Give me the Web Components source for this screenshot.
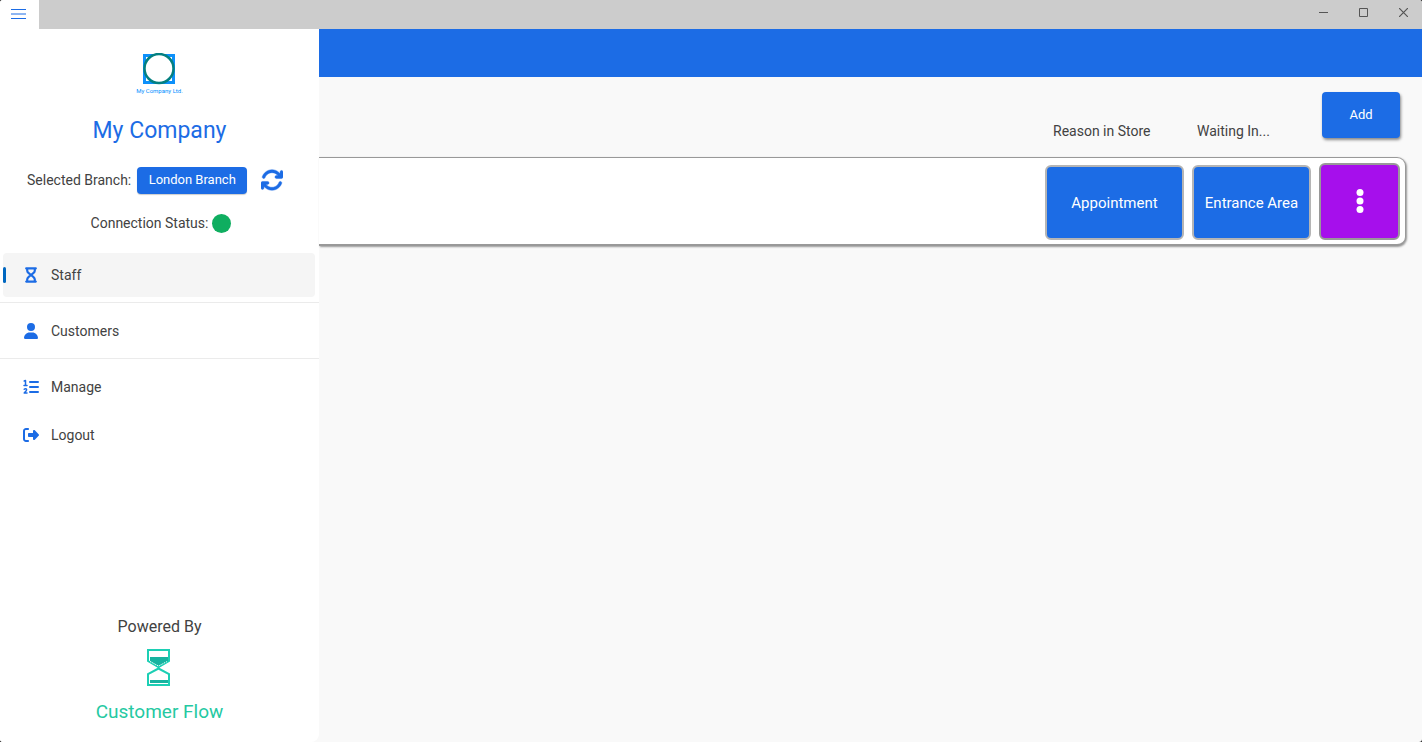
<!DOCTYPE html>
<html lang="en">
<head>
<meta charset="utf-8">
<title>My Company</title>
<style>
  html { background: #222; }
  body { margin: 0; font: 14px/20px Roboto, "Liberation Sans", sans-serif; color: #424242; --brand: #1c6ce5; }
</style>
</head>
<body>
<flow-app></flow-app>
<script>
const define = (name, html) => {
  const template = document.createElement('template');
  template.innerHTML = '<style>*{box-sizing:border-box}button{font:inherit;border:0;margin:0;padding:0;cursor:pointer}svg{display:block}</style>' + html;
  customElements.define(name, class extends HTMLElement {
    constructor() {
      super();
      this.attachShadow({ mode: 'open' }).append(template.content.cloneNode(true));
    }
  });
};

define('title-bar', `
<style>
  :host { display: flex; justify-content: space-between; height: 29px; background: #ccc; }
  .menu { width: 39px; padding: 0 2px 2px 0; background: #fff; display: grid; place-items: center; color: var(--brand); }
  .window { display: flex; }
  .window button { width: 40px; height: 25px; padding-left: 2px; background: none; display: grid; place-items: center; color: #555; }
</style>
<button class="menu" aria-label="Menu"><svg width="15" height="11" fill="none" stroke="currentColor"><path d="M0 1.500h15M0 6h15M0 10.500h15"/></svg></button>
<div class="window">
  <button aria-label="Minimise"><svg width="9" height="9" fill="none" stroke="currentColor"><path d="M0 4.500h9"/></svg></button>
  <button aria-label="Maximise"><svg width="9" height="9" fill="none" stroke="currentColor"><path d="M.5.5h8v8h-8z"/></svg></button>
  <button aria-label="Close"><svg width="9" height="9" fill="none" stroke="currentColor" stroke-width="1.200"><path d="M0 0l9 9M9 0l-9 9"/></svg></button>
</div>`);

define('company-brand', `
<style>
  :host { display: flex; flex-direction: column; align-items: center; }
  h1 { margin: 20px 0 0; font-size: 23px; line-height: 32px; font-weight: 400; color: var(--brand); }
  small { font-size: 6px; line-height: 8px; color: #0090ff; }
</style>
<svg width="35" height="34" fill="none"><path d="M2.500 2.500h29v27h-29z" stroke="#0d90fa" stroke-width="3"/><circle cx="17" cy="15.500" r="14.500" fill="#fff" stroke="#048080" stroke-width="2.500"/></svg>
<small>My Company Ltd.</small>
<h1><slot></slot></h1>`);

define('branch-status', `
<style>
  :host { display: block; }
  div { display: flex; align-items: center; }
  .branch { padding-left: 27px; height: 28px; }
  .pick { width: 110px; height: 27px; margin: 0 14px 0 6px; border-radius: 4px; background: var(--brand); color: #fff; font-size: 13px; box-shadow: 0 1px 1px #ccc; }
  .refresh { background: none; color: var(--brand); }
  .status { justify-content: center; gap: 4px; margin-top: 19px; padding-left: 3px; }
  i { width: 19px; height: 19px; border-radius: 50%; background: #0fae60; }
</style>
<div class="branch"><label for="pick">Selected Branch:</label><button class="pick" id="pick">London Branch</button>
<button class="refresh" aria-label="Refresh"><svg width="22" height="22" viewBox="16 16 480 480" fill="currentColor" stroke="currentColor" stroke-width="10"><path d="M105.1 202.6c7.7-21.8 20.2-42.3 37.800-59.800c62.500-62.500 163.800-62.500 226.300 0L386.300 160 352 160c-17.700 0-32 14.300-32 32s14.300 32 32 32l111.900 0c17.700 0 32-14.300 32-32l0-112c0-17.700-14.300-32-32-32s-32 14.300-32 32l0 35.200L414.400 97.600c-87.500-87.500-229.300-87.500-316.800 0C73.200 122 55.600 150.700 44.800 181.400c-5.900 16.700 2.900 34.900 19.500 40.800s34.900-2.900 40.800-19.500zM39 289.300c-5 1.500-9.800 4.200-13.700 8.200c-4 4-6.700 8.800-8.100 14c-.8 3-1.200 6-1.200 8.900L16 432c0 17.700 14.300 32 32 32s32-14.300 32-32l0-35.100 17.600 17.500c87.500 87.400 229.300 87.400 316.700 0c24.400-24.400 42.100-53.100 52.900-83.800c5.900-16.700-2.900-34.900-19.500-40.800s-34.900 2.900-40.800 19.500c-7.700 21.800-20.200 42.300-37.800 59.800c-62.500 62.500-163.800 62.500-226.300 0L125.600 352l34.400 0c17.700 0 32-14.300 32-32s-14.300-32-32-32L48.400 288c-3.200 0-6.400.4-9.400 1.300z"/></svg></button></div>
<div class="status"><span>Connection Status:</span><i role="img" aria-label="Connected"></i></div>`);

define('nav-item', `
<style>
  :host { display: block; padding: 2px 4px 2px 3px; }
  a { display: flex; align-items: center; gap: 12px; height: 44px; padding-left: 20px; border-radius: 4px; color: inherit; text-decoration: none; position: relative; }
  ::slotted(svg) { display: block; width: 16px; height: 16px; color: var(--brand); }
  :host([current]) a { background: #f5f5f5; }
  :host([current]) a::before { content: ""; position: absolute; left: 0; top: 14px; width: 3px; height: 16px; border-radius: 2px; background: #0067c0; }
</style>
<a href="#"><slot name="icon"></slot><slot></slot></a>`);

define('powered-by', `
<style>
  :host { display: flex; flex-direction: column; align-items: center; font-size: 16px; line-height: 24px; }
  svg { margin: 10px 0 12px; }
  strong { font-size: 19px; line-height: 28px; font-weight: 400; color: #25c9a2; }
</style>
<span>Powered By</span>
<svg width="25" height="37" fill="none" stroke="#1ccfb4" stroke-width="2"><path d="M1 1h21v11l-10.500 6L1 12zM1 36h21V25l-10.500-5.500L1 25z"/><path d="M3 8h18v4l-9.500 5L3 12zM3 31h18v3H3z" fill="#17b3a0" stroke="none"/><path d="M3 12.500l8.500 4.500 8.500-4.500" stroke="#fff" stroke-width="1" stroke-dasharray="1 1"/></svg>
<strong>Customer Flow</strong>`);

define('side-bar', `
<style>
  :host { display: flex; flex-direction: column; width: 319px; flex: none; background: #fff; border-radius: 0 0 8px 0; padding: 24px 0 16px; }
  branch-status { margin-top: 19px; }
  nav { margin-top: 18px; }
  hr { margin: 3px 0 4px; border: 0; height: 1px; background: #ebebeb; }
  powered-by { margin-top: auto; }
</style>
<company-brand>My Company</company-brand>
<branch-status></branch-status>
<nav>
  <nav-item current><svg slot="icon" viewBox="0 0 16 16" fill="none" stroke="currentColor" stroke-width="2.200" stroke-linecap="round" stroke-linejoin="round"><path d="M3.200 1.400h9.600M3.200 14.600h9.600M4.200 1.500v2q0 1.500 1.500 2.700L8 8l2.300-1.800q1.500-1.200 1.500-2.700v-2M4.200 14.500v-2q0-1.500 1.500-2.700L8 8l2.300 1.800q1.500 1.200 1.500 2.700v2"/></svg>Staff</nav-item>
  <hr>
  <nav-item><svg slot="icon" viewBox="-32 0 512 512" fill="currentColor"><path d="M224 256A128 128 0 1 0 224 0a128 128 0 1 0 0 256zm-45.700 48C79.800 304 0 383.800 0 482.300C0 498.700 13.300 512 29.700 512H418.300c16.400 0 29.700-13.300 29.700-29.700C448 383.800 368.200 304 269.700 304H178.300z"/></svg>Customers</nav-item>
  <hr>
  <nav-item><svg slot="icon" viewBox="0 0 16 16" fill="none" stroke="currentColor" stroke-linecap="round" stroke-linejoin="round"><path d="M7 3h8M7 8h8M7 13h8" stroke-width="2"/><path d="M1.200 2l1.300-.5v5M1 6.500h3M1.200 10.300q1-1 2-.4.900.8 0 1.900L1.200 14H4" stroke-width="1.500"/></svg>Manage</nav-item>
  <nav-item><svg slot="icon" viewBox="0 0 512 512" fill="currentColor"><path d="M377.900 105.900L500.700 228.700c7.200 7.200 11.300 17.100 11.300 27.300s-4.100 20.100-11.300 27.300L377.900 406.100c-6.400 6.400-15 9.900-24 9.900c-18.700 0-33.900-15.200-33.900-33.900l0-62.100-128 0c-17.700 0-32-14.300-32-32l0-64c0-17.700 14.300-32 32-32l128 0 0-62.100c0-18.700 15.200-33.900 33.900-33.900c9 0 17.600 3.600 24 9.900zM160 96L96 96c-17.700 0-32 14.300-32 32l0 256c0 17.700 14.300 32 32 32l64 0c17.700 0 32 14.300 32 32s-14.300 32-32 32l-64 0c-53 0-96-43-96-96L0 128C0 75 43 32 96 32l64 0c17.700 0 32 14.300 32 32s-14.300 32-32 32z"/></svg>Logout</nav-item>
</nav>
<powered-by></powered-by>`);

define('queue-header', `
<style>
  :host { display: grid; grid-template-columns: 1fr 136px 117px 78px; gap: 8px; height: 46px; padding-right: 22px; }
  span { align-self: end; line-height: 14px; }
  .reason { grid-column: 2; }
  button { border-radius: 4px; background: var(--brand); color: #fff; font-size: 13px; box-shadow: 1px 2px 3px #888; }
</style>
<span class="reason">Reason in Store</span><span>Waiting In...</span><button>Add</button>`);

define('queue-row', `
<style>
  :host { display: grid; grid-template-columns: 1fr 139px 119px 81px; gap: 8px; align-items: end; height: 89px; margin-right: 16px; padding: 5px 5px 4px 0; background: #fff; border: solid #999; border-width: 1px 1px 2px 0; border-radius: 0 9px 9px 0; box-shadow: 1px 1px 2px #999; }
  button { height: 75px; border: 2px solid #b5b5b5; border-radius: 6px; background: var(--brand); color: #fff; font-size: 15px; }
  .reason { grid-column: 2; }
  .more { height: 77px; background: #a60fec; border-color: #999; display: grid; place-items: center; }
</style>
<button class="reason"><slot name="reason"></slot></button>
<button><slot name="area"></slot></button>
<button class="more" aria-label="More options"><svg width="8" height="26" fill="#fff"><circle cx="4" cy="3.500" r="3.500"/><circle cx="4" cy="12" r="3.500"/><circle cx="4" cy="20.500" r="3.500"/></svg></button>`);

define('flow-app', `
<style>
  :host { display: flex; flex-direction: column; min-height: 100vh; background: #f9f9f9; border-radius: 3px; overflow: hidden; }
  .body { display: flex; flex: 1; }
  main { flex: 1; min-width: 0; }
  header { height: 48px; background: var(--brand); }
  queue-header { margin: 15px 0 19px; }
</style>
<title-bar></title-bar>
<div class="body">
  <side-bar></side-bar>
  <main><header></header><queue-header></queue-header>
    <queue-row><span slot="reason">Appointment</span><span slot="area">Entrance Area</span></queue-row>
  </main>
</div>`);
</script>
</body>
</html>
